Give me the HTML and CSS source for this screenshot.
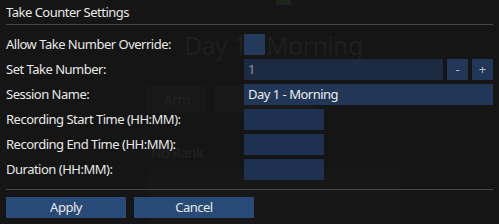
FILE: index.html
```html
<!DOCTYPE html>
<html>
<head>
<meta charset="utf-8">
<link rel="stylesheet" href="styles.css">
</head>
<body>
<div class="ghost" aria-hidden="true">
  <div class="ghost-tab"></div>
  <div class="ghost-title">Day 1 - Morning</div>
  <div class="ghost-btn ghost-arm">Arm</div>
  <div class="ghost-btn ghost-pause">Pau</div>
  <div class="ghost-btn ghost-next">Next</div>
  <div class="ghost-rank">No Rank</div>
  <div class="ghost-panel"></div>
</div>
<div class="dialog">
  <div class="title">Take Counter Settings</div>
  <div class="sep"></div>
  <div class="form">
    <div class="label">Allow Take Number Override:</div>
    <div class="ctrl"><div class="checkbox"></div></div>

    <div class="label">Set Take Number:</div>
    <div class="ctrl take">
      <div class="input dim">1</div>
      <div class="step">-</div>
      <div class="step">+</div>
    </div>

    <div class="label">Session Name:</div>
    <div class="ctrl"><div class="input bright">Day 1 - Morning</div></div>

    <div class="label">Recording Start Time (HH:MM):</div>
    <div class="ctrl"><div class="input short"></div></div>

    <div class="label">Recording End Time (HH:MM):</div>
    <div class="ctrl"><div class="input short"></div></div>

    <div class="label">Duration (HH:MM):</div>
    <div class="ctrl"><div class="input short"></div></div>
  </div>
  <div class="sep sep2"></div>
  <div class="buttons">
    <div class="btn">Apply</div>
    <div class="btn">Cancel</div>
  </div>
</div>
</body>
</html>
```

FILE: styles.css
```css
html, body {
  margin: 0;
  padding: 0;
  width: 499px;
  height: 224px;
  overflow: hidden;
  background: #151515;
  font-family: "Noto Sans", "Open Sans", sans-serif;
  font-size: 13px;
  letter-spacing: -0.5px;
  color: #e8e8e8;
}

body { position: relative; }

.ghost {
  position: absolute;
  inset: 0;
  z-index: 0;
}
.ghost-tab {
  position: absolute;
  left: 276px; top: 0;
  width: 15px; height: 5px;
  background: #1b261b;
}
.ghost-title {
  position: absolute;
  left: 184px; top: 28px;
  font-size: 25px;
  letter-spacing: -0.6px;
  line-height: 34px;
  color: #1f1f1f;
  white-space: nowrap;
}
.ghost-btn {
  position: absolute;
  top: 86px;
  height: 27px;
  line-height: 27px;
  text-align: center;
  background: #181818;
  color: #232323;
  font-size: 14px;
}
.ghost-arm { left: 147px; width: 60px; }
.ghost-pause { left: 213px; width: 60px; text-align: left; padding-left: 43px; }
.ghost-next { left: 343px; width: 60px; top: 86px; line-height: 28px; background: transparent; }
.ghost-rank {
  position: absolute;
  left: 151px; top: 143px;
  font-size: 14px;
  line-height: 20px;
  color: #232323;
}
.ghost-panel {
  position: absolute;
  left: 147px; top: 169px;
  width: 254px; height: 60px;
  background: #171718;
}

.dialog {
  position: relative;
  z-index: 1;
  padding: 0 6px;
}

.title {
  height: 24px;
  line-height: 24px;
  white-space: nowrap;
}

.sep {
  height: 1px;
  background: #47464f;
}

.form {
  display: grid;
  grid-template-columns: 238px 249px;
  grid-auto-rows: 21px;
  row-gap: 4px;
  padding-top: 9px;
  padding-bottom: 9px;
}

.label {
  line-height: 21px;
  white-space: nowrap;
}

.ctrl {
  display: flex;
  gap: 4px;
}

.checkbox {
  width: 21px;
  height: 21px;
  background: #243a5c;
}

.input {
  flex: 1;
  height: 21px;
  line-height: 21px;
  padding-left: 4px;
  background: #1e2f4a;
  white-space: nowrap;
}
.input.dim { color: #8e96a2; background: #1d2b42; }
.input.bright { background: #223757; color: #ececec; }
.input.short { flex: 0 0 80px; padding: 0; background: #1f3150; }

.step {
  width: 21px;
  height: 21px;
  line-height: 20px;
  text-align: center;
  background: #223758;
  color: #b4bcc6;
  letter-spacing: 0;
}

.buttons {
  display: flex;
  gap: 8px;
  padding-top: 7px;
}

.btn {
  width: 120px;
  height: 21px;
  line-height: 21px;
  text-align: center;
  background: #284a76;
  color: #e8e8e8;
}
```
